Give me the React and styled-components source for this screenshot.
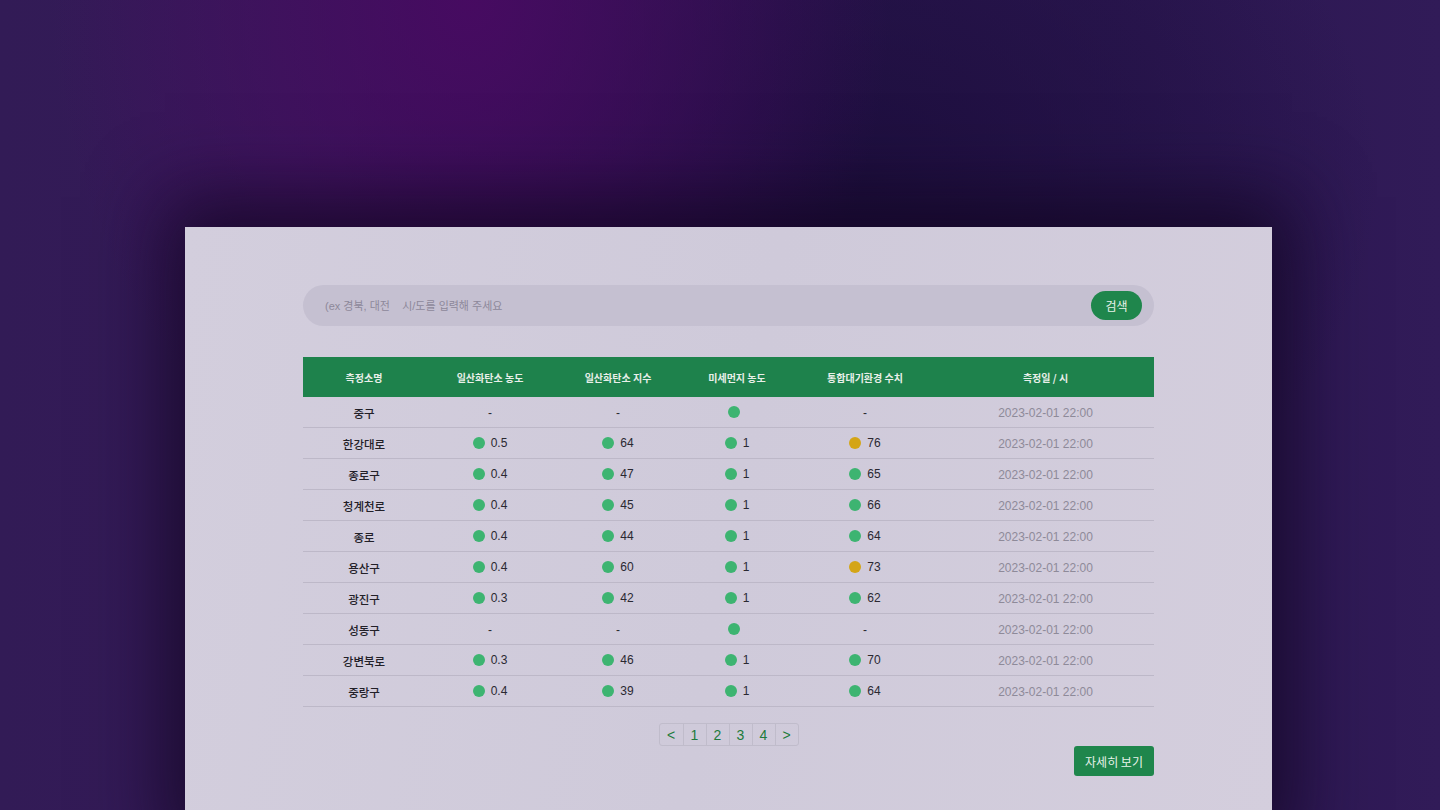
import React from 'react';
import styled, { createGlobalStyle } from 'styled-components';

const GlobalStyle = createGlobalStyle`
  html, body {
    margin: 0;
    padding: 0;
    height: 100%;
    overflow: hidden;
  }
  body {
    font-family: "Liberation Sans", "Noto Sans CJK KR", sans-serif;
    background: #2e1a54;
  }
`;

const Page = styled.div`
  width: 1440px;
  height: 810px;
  overflow: hidden;
  background:
    radial-gradient(ellipse 420px 520px at 470px 0px, rgba(72, 10, 98, 0.95), rgba(72, 10, 98, 0) 100%),
    radial-gradient(ellipse 520px 420px at 860px 180px, rgba(28, 14, 60, 0.9), rgba(28, 14, 60, 0) 100%),
    linear-gradient(to right, #321b56 0%, #351a58 20%, #2a1550 55%, #2c1752 80%, #311b58 100%);
  padding-top: 227px;
  box-sizing: border-box;
`;

const Card = styled.section`
  margin-left: 185px;
  width: 1087px;
  min-height: 620px;
  background: linear-gradient(100deg, #d3cedd 0%, #cfcada 50%, #d4cedd 100%);
  box-shadow: 0 -10px 70px 20px rgba(18, 6, 32, 0.75);
  padding: 58px 118px 0;
  box-sizing: border-box;
`;

const SearchBar = styled.form`
  display: flex;
  align-items: center;
  height: 41px;
  border-radius: 21px;
  background: #c5c0d1;
  padding: 0 12px 0 22px;
`;

const SearchInput = styled.input`
  flex: 1;
  padding: 0;
  border: none;
  outline: none;
  background: transparent;
  font-family: "Liberation Sans", "Noto Sans CJK KR", sans-serif;
  font-size: 11px;
  color: #333;
  &::placeholder {
    color: #8d889a;
  }
`;

const SearchButton = styled.button`
  width: 51px;
  height: 29px;
  border: none;
  border-radius: 15px;
  background: #1f864c;
  color: #e8f2ea;
  font-family: "Noto Sans CJK KR", sans-serif;
  font-size: 12px;
  cursor: pointer;
`;

const Table = styled.table`
  width: 100%;
  margin-top: 31px;
  border-collapse: collapse;
  table-layout: fixed;
`;

const HeadCell = styled.th`
  height: 40px;
  padding: 0;
  background: #1e824c;
  color: #e9efe9;
  font-family: "Noto Sans CJK KR", sans-serif;
  font-size: 10px;
  font-weight: 600;
  text-align: center;
`;

const Row = styled.tr`
  border-bottom: 1px solid #bdb8c8;
`;

const Cell = styled.td`
  height: 28px;
  padding: 2px 0 0;
  text-align: center;
  font-size: 12px;
  color: ${p => (p.$muted ? '#8e8a99' : '#2a2831')};
`;

const NameCell = styled(Cell)`
  font-family: "Noto Sans CJK KR", sans-serif;
  font-size: 11.5px;
  font-weight: 500;
  color: #222028;
`;

const Value = styled.span`
  display: inline-flex;
  align-items: center;
  gap: 6px;
`;

const Dot = styled.span`
  display: inline-block;
  width: 12px;
  height: 12px;
  border-radius: 50%;
  background: ${p => (p.$level === 'warn' ? '#d4a516' : '#3db471')};
`;

const Footer = styled.div`
  display: flex;
  flex-direction: column;
  align-items: center;
  margin-top: 16px;
`;

const Pager = styled.div`
  display: flex;
  border: 1px solid #c0bccb;
  border-radius: 3px;
  overflow: hidden;
`;

const PageButton = styled.button`
  width: 23px;
  height: 21px;
  padding: 0;
  border: none;
  border-left: ${p => (p.$first ? 'none' : '1px solid #c0bccb')};
  background: transparent;
  color: #1e7b3c;
  font-family: "Liberation Sans", sans-serif;
  font-size: 14px;
  cursor: pointer;
`;

const DetailButton = styled.button`
  align-self: flex-end;
  height: 30px;
  width: 80px;
  border: none;
  border-radius: 3px;
  background: #1f864c;
  color: #e8f2ea;
  font-family: "Noto Sans CJK KR", sans-serif;
  font-size: 12px;
  cursor: pointer;
`;

const columns = [
  { label: '측정소명', width: 122 },
  { label: '일산화탄소 농도', width: 130 },
  { label: '일산화탄소 지수', width: 126 },
  { label: '미세먼지 농도', width: 112 },
  { label: '통합대기환경 수치', width: 144 },
  { label: '측정일 / 시', width: 217 },
];

const rows = [
  { name: '중구', co: null, coIdx: null, pm: '', khai: null },
  { name: '한강대로', co: '0.5', coIdx: '64', pm: '1', khai: '76' },
  { name: '종로구', co: '0.4', coIdx: '47', pm: '1', khai: '65' },
  { name: '청계천로', co: '0.4', coIdx: '45', pm: '1', khai: '66' },
  { name: '종로', co: '0.4', coIdx: '44', pm: '1', khai: '64' },
  { name: '용산구', co: '0.4', coIdx: '60', pm: '1', khai: '73' },
  { name: '광진구', co: '0.3', coIdx: '42', pm: '1', khai: '62' },
  { name: '성동구', co: null, coIdx: null, pm: '', khai: null },
  { name: '강변북로', co: '0.3', coIdx: '46', pm: '1', khai: '70' },
  { name: '중랑구', co: '0.4', coIdx: '39', pm: '1', khai: '64' },
];

const level = (v) => (Number(v) > 70 ? 'warn' : 'good');

const Reading = ({ value, dotLevel }) => {
  if (value === null) return '-';
  return (
    <Value>
      <Dot $level={dotLevel} />
      <span>{value}</span>
    </Value>
  );
};

export default function App() {
  return (
    <>
      <GlobalStyle />
      <Page>
        <Card>
          <SearchBar onSubmit={e => e.preventDefault()}>
            <SearchInput placeholder="(ex 경북, 대전    시/도를 입력해 주세요" />
            <SearchButton type="submit">검색</SearchButton>
          </SearchBar>

          <Table>
            <colgroup>
              {columns.map(c => <col key={c.label} style={{ width: c.width }} />)}
            </colgroup>
            <thead>
              <tr>
                {columns.map(c => <HeadCell key={c.label}>{c.label}</HeadCell>)}
              </tr>
            </thead>
            <tbody>
              {rows.map(r => (
                <Row key={r.name}>
                  <NameCell>{r.name}</NameCell>
                  <Cell><Reading value={r.co} /></Cell>
                  <Cell><Reading value={r.coIdx} /></Cell>
                  <Cell><Reading value={r.pm} /></Cell>
                  <Cell><Reading value={r.khai} dotLevel={r.khai && level(r.khai)} /></Cell>
                  <Cell $muted>2023-02-01 22:00</Cell>
                </Row>
              ))}
            </tbody>
          </Table>

          <Footer>
            <Pager>
              {['<', '1', '2', '3', '4', '>'].map((p, i) => (
                <PageButton key={p} $first={i === 0}>{p}</PageButton>
              ))}
            </Pager>
            <DetailButton>자세히 보기</DetailButton>
          </Footer>
        </Card>
      </Page>
    </>
  );
}
